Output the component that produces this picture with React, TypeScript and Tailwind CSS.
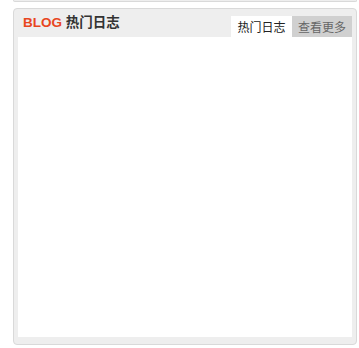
const BlogBox = () => {
	return (
		<div className="ml-[13px] w-[344px] h-[337px] flex flex-col rounded-[4px] border border-[#d9d9d9] bg-[#eeeeee] px-[4px] pb-[7px]">
			<div className="h-[28px] flex items-end justify-between">
				<h2 className="self-center pl-[5px] pt-[1px] text-[13.5px] font-bold text-[#333] font-['Liberation_Sans','Noto_Sans_CJK_SC',sans-serif]">
					<span className="text-[#e8461e]">BLOG</span> 热门日志
				</h2>
				<div className="flex h-[21px] text-[12px] leading-[21px] font-['Noto_Sans_CJK_SC',sans-serif]">
					<span className="w-[61px] bg-white text-center text-[#222]">
						热门日志
					</span>
					<a href="#" className="w-[60px] bg-[#d0d0d0] text-center text-[#666]">
						查看更多
					</a>
				</div>
			</div>
			<div className="flex-1 bg-white"></div>
		</div>
	);
};

export default function App() {
	return (
		<div className="w-[359px] h-[348px] bg-white overflow-hidden">
			{/* bottom edge of the box above */}
			<div className="ml-[13px] w-[344px] h-[2px] mb-[6px] rounded-b-[4px] border-x border-b border-[#d9d9d9] bg-[#eeeeee]"></div>
			<BlogBox />
		</div>
	);
}
